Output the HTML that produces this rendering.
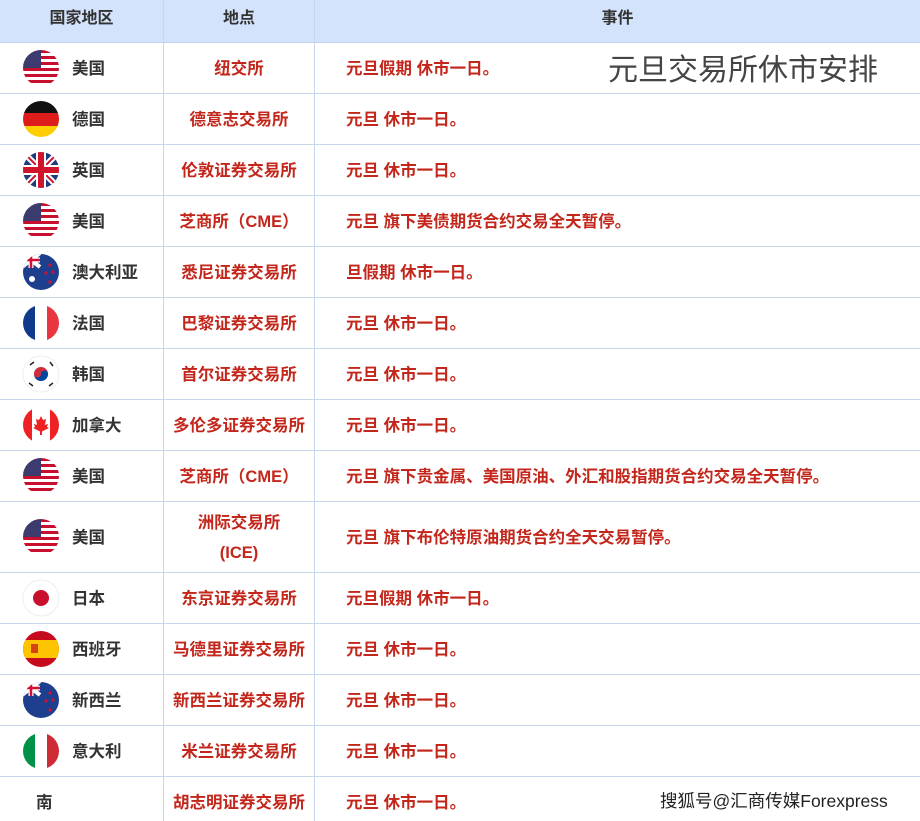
<!DOCTYPE html>
<html><head><meta charset="utf-8"><style>
body{margin:0;width:920px;height:821px;background:#fff;overflow:hidden;font-family:"Liberation Sans","Noto Sans CJK SC",sans-serif;position:relative}
.hd{position:absolute;left:0;top:0;width:920px;height:42px;background:#d3e3fb;border-bottom:1px solid #c5d3ea}
.hd div{position:absolute;top:0;line-height:38px;font-weight:bold;font-size:16px;color:#333;text-align:center}
.vl{position:absolute;top:0;width:1px;height:821px;background:#c8d6ec}
.hl{position:absolute;left:0;width:920px;height:1px;background:#c8d6ec}
.row{position:absolute;left:0;width:920px}
.c{position:absolute;left:72px;font-weight:bold;font-size:16.5px;color:#333;line-height:24px}
.p{position:absolute;left:164px;width:150px;text-align:center;font-weight:bold;font-size:16.5px;color:#c3261b;line-height:24px}
.e{position:absolute;left:346px;font-weight:bold;font-size:16.5px;color:#c3261b;white-space:nowrap;line-height:24px}
.f{position:absolute;left:22px;width:38px;height:38px}
</style></head><body>
<div class="hd"><div style="left:0;width:163px">国家地区</div><div style="left:164px;width:150px">地点</div><div style="left:315px;width:605px">事件</div></div>
<div class="vl" style="left:163px"></div><div class="vl" style="left:314px"></div>
<div class="hl" style="top:93px"></div><div class="hl" style="top:144px"></div><div class="hl" style="top:195px"></div><div class="hl" style="top:246px"></div><div class="hl" style="top:297px"></div><div class="hl" style="top:348px"></div><div class="hl" style="top:399px"></div><div class="hl" style="top:450px"></div><div class="hl" style="top:501px"></div><div class="hl" style="top:572px"></div><div class="hl" style="top:623px"></div><div class="hl" style="top:674px"></div><div class="hl" style="top:725px"></div><div class="hl" style="top:776px"></div>
<svg width="0" height="0" style="position:absolute"><defs>
<clipPath id="cc"><circle cx="19" cy="19" r="18"/></clipPath>
<g id="us" clip-path="url(#cc)"><rect width="38" height="38" fill="#fff"/><g fill="#c8102e"><rect y="1" width="38" height="3"/><rect y="7" width="38" height="3"/><rect y="13" width="38" height="3"/><rect y="19" width="38" height="3"/><rect y="25" width="38" height="3"/><rect y="31" width="38" height="3"/></g><rect width="19" height="19" fill="#3c3b6e"/></g>
<g id="nz" clip-path="url(#cc)"><rect width="38" height="38" fill="#1e3f8e"/><path d="M0 0L18 14M18 0L0 14" stroke="#fff" stroke-width="4"/><path d="M9 0V15M0 7H18" stroke="#fff" stroke-width="5"/><path d="M9 0V15M0 7H18" stroke="#d21034" stroke-width="2.5"/><g fill="#d21034"><circle cx="28" cy="12" r="1.6"/><circle cx="24" cy="20" r="1.6"/><circle cx="31" cy="19" r="1.6"/><circle cx="28" cy="29" r="1.6"/></g></g>
</defs></svg>
<div class="row" style="top:43px;height:50px"><svg class="f" style="top:6px"><use href="#us"/></svg><div class="c" style="top:14px">美国</div><div class="p" style="top:14px">纽交所</div><div class="e" style="top:14px">元旦假期 休市一日。</div>
<div style="position:absolute;left:608px;top:4px;font-size:30px;color:#444;font-family:'Noto Sans CJK SC',sans-serif;line-height:40px">元旦交易所休市安排</div></div>
<div class="row" style="top:94px;height:50px"><svg class="f" style="top:6px"><g clip-path="url(#cc)"><rect width="38" height="13" fill="#111"/><rect y="13" width="38" height="13" fill="#dd1c1c"/><rect y="26" width="38" height="12" fill="#ffce00"/></g></svg><div class="c" style="top:14px">德国</div><div class="p" style="top:14px">德意志交易所</div><div class="e" style="top:14px">元旦 休市一日。</div></div>
<div class="row" style="top:145px;height:50px"><svg class="f" style="top:6px"><g clip-path="url(#cc)"><rect width="38" height="38" fill="#1f3d7a"/><path d="M0 0L38 38M38 0L0 38" stroke="#fff" stroke-width="6"/><path d="M0 0L38 38M38 0L0 38" stroke="#cf142b" stroke-width="2"/><path d="M19 0V38M0 19H38" stroke="#fff" stroke-width="10"/><path d="M19 0V38M0 19H38" stroke="#cf142b" stroke-width="6"/></g></svg><div class="c" style="top:14px">英国</div><div class="p" style="top:14px">伦敦证券交易所</div><div class="e" style="top:14px">元旦 休市一日。</div></div>
<div class="row" style="top:196px;height:50px"><svg class="f" style="top:6px"><use href="#us"/></svg><div class="c" style="top:14px">美国</div><div class="p" style="top:14px">芝商所（CME）</div><div class="e" style="top:14px">元旦 旗下美债期货合约交易全天暂停。</div></div>
<div class="row" style="top:247px;height:50px"><svg class="f" style="top:6px"><use href="#nz"/><circle cx="10" cy="26" r="3" fill="#fff"/></svg><div class="c" style="top:14px">澳大利亚</div><div class="p" style="top:14px">悉尼证券交易所</div><div class="e" style="top:14px">旦假期 休市一日。</div></div>
<div class="row" style="top:298px;height:50px"><svg class="f" style="top:6px"><g clip-path="url(#cc)"><rect width="13" height="38" fill="#0f3a8c"/><rect x="13" width="12" height="38" fill="#fff"/><rect x="25" width="13" height="38" fill="#e8353f"/></g></svg><div class="c" style="top:14px">法国</div><div class="p" style="top:14px">巴黎证券交易所</div><div class="e" style="top:14px">元旦 休市一日。</div></div>
<div class="row" style="top:349px;height:50px"><svg class="f" style="top:6px"><circle cx="19" cy="19" r="18" fill="#fff" stroke="#eee"/><circle cx="19" cy="19" r="7" fill="#cd2e3a"/><path d="M12 19a3.5 3.5 0 0 0 7 0a3.5 3.5 0 0 1 7 0a7 7 0 0 1 -14 0z" fill="#0047a0"/><g stroke="#222" stroke-width="1.5"><path d="M8 10l4 -3M28 7l3 4M7 28l4 3M27 31l4-3"/></g></svg><div class="c" style="top:14px">韩国</div><div class="p" style="top:14px">首尔证券交易所</div><div class="e" style="top:14px">元旦 休市一日。</div></div>
<div class="row" style="top:400px;height:50px"><svg class="f" style="top:6px"><g clip-path="url(#cc)"><rect width="38" height="38" fill="#fff"/><rect width="10" height="38" fill="#e22"/><rect x="28" width="10" height="38" fill="#e22"/><path d="M19 10l2 4 3-1-1 6 3-1-1 3 2 1-8 4-8-4 2-1-1-3 3 1-1-6 3 1z" fill="#e22"/><rect x="18" y="24" width="2" height="5" fill="#e22"/></g></svg><div class="c" style="top:14px">加拿大</div><div class="p" style="top:14px">多伦多证券交易所</div><div class="e" style="top:14px">元旦 休市一日。</div></div>
<div class="row" style="top:451px;height:50px"><svg class="f" style="top:6px"><use href="#us"/></svg><div class="c" style="top:14px">美国</div><div class="p" style="top:14px">芝商所（CME）</div><div class="e" style="top:14px">元旦 旗下贵金属、美国原油、外汇和股指期货合约交易全天暂停。</div></div>
<div class="row" style="top:502px;height:70px"><svg class="f" style="top:16px"><use href="#us"/></svg><div class="c" style="top:24px">美国</div><div class="p" style="top:6px;line-height:30px">洲际交易所<br>(ICE)</div><div class="e" style="top:24px">元旦 旗下布伦特原油期货合约全天交易暂停。</div></div>
<div class="row" style="top:573px;height:50px"><svg class="f" style="top:6px"><circle cx="19" cy="19" r="18" fill="#fff" stroke="#eee"/><circle cx="19" cy="19" r="8" fill="#c8102e"/></svg><div class="c" style="top:14px">日本</div><div class="p" style="top:14px">东京证券交易所</div><div class="e" style="top:14px">元旦假期 休市一日。</div></div>
<div class="row" style="top:624px;height:50px"><svg class="f" style="top:6px"><g clip-path="url(#cc)"><rect width="38" height="38" fill="#c60b1e"/><rect y="10" width="38" height="18" fill="#ffc400"/><rect x="9" y="14" width="7" height="9" fill="#c60b1e" opacity=".7"/></g></svg><div class="c" style="top:14px">西班牙</div><div class="p" style="top:14px">马德里证券交易所</div><div class="e" style="top:14px">元旦 休市一日。</div></div>
<div class="row" style="top:675px;height:50px"><svg class="f" style="top:6px"><use href="#nz"/></svg><div class="c" style="top:14px">新西兰</div><div class="p" style="top:14px">新西兰证券交易所</div><div class="e" style="top:14px">元旦 休市一日。</div></div>
<div class="row" style="top:726px;height:50px"><svg class="f" style="top:6px"><g clip-path="url(#cc)"><rect width="13" height="38" fill="#009246"/><rect x="13" width="12" height="38" fill="#fff"/><rect x="25" width="13" height="38" fill="#ce2b37"/></g></svg><div class="c" style="top:14px">意大利</div><div class="p" style="top:14px">米兰证券交易所</div><div class="e" style="top:14px">元旦 休市一日。</div></div>
<div class="row" style="top:777px;height:44px"><div class="c" style="top:14px;left:36px">南</div><div class="p" style="top:14px">胡志明证券交易所</div><div class="e" style="top:14px">元旦 休市一日。</div>
<div style="position:absolute;left:660px;top:12px;font-size:17.5px;color:#222;white-space:nowrap;line-height:24px">搜狐号@汇商传媒Forexpress</div></div>
</body></html>
